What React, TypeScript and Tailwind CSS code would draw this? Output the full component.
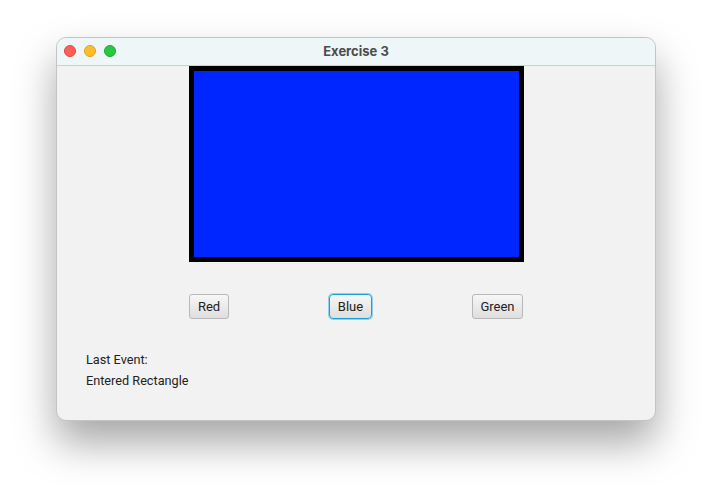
import React from "react";

const font = { fontFamily: "Roboto, 'Noto Sans', 'Liberation Sans', sans-serif" };
const titleFont = { fontFamily: "Inter, 'Noto Sans', 'Liberation Sans', sans-serif" };

function Btn({ label, width, focused }: { label: string; width: string; focused?: boolean }) {
  return (
    <button
      className={
        (focused
          ? "h-[25px] rounded-[4px] border border-[#1aa0d8] ring-1 ring-[#8fd2ee] "
          : "h-[25px] rounded-[3px] border border-[#b8b8b8] ") +
        width +
        " flex items-center justify-center bg-gradient-to-b from-[#f7f7f7] to-[#dedede] text-[13px] text-[#222] leading-none"
      }
      style={font}
    >
      {label}
    </button>
  );
}

export default function App() {
  return (
    <div className="w-[712px] h-[495px] bg-white pt-[37px] pl-[56px]" style={font}>
      <div className="w-[600px] h-[384px] rounded-[10px] bg-[#f2f2f2] border border-[#c4c4c4] shadow-[0_22px_40px_rgba(0,0,0,0.35)] overflow-hidden flex flex-col">
        {/* title bar */}
        <div className="relative h-[28px] shrink-0 bg-[#eff6f8] border-b border-[#cfcfcf] flex items-center justify-center">
          <div className="absolute left-[7px] top-[7px] flex gap-[8px]">
            <span className="w-[12px] h-[12px] rounded-full bg-[#fe5f57] border border-[#e2463f]" />
            <span className="w-[12px] h-[12px] rounded-full bg-[#febc2e] border border-[#e1a116]" />
            <span className="w-[12px] h-[12px] rounded-full bg-[#28c840] border border-[#1aab29]" />
          </div>
          <span className="text-[13px] font-bold text-[#4c4c4c] mt-[1px]" style={titleFont}>
            Exercise 3
          </span>
        </div>

        {/* content */}
        <div className="flex flex-col items-center">
          <div className="w-[335px] h-[196px] bg-[#0026ff] border-[5px] border-black" />
          <div className="mt-[32px] flex gap-[100px]">
            <Btn label="Red" width="w-[40px]" />
            <Btn label="Blue" width="w-[43px]" focused />
            <Btn label="Green" width="w-[51px]" />
          </div>
        </div>
        <div className="mt-[30px] pl-[29px] text-[12.7px] leading-[21px] text-[#222]">
          <div>Last Event:</div>
          <div>Entered Rectangle</div>
        </div>
      </div>
    </div>
  );
}
